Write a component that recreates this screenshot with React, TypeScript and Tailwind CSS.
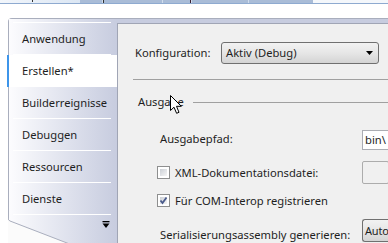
import React from "react";

const font = { fontFamily: '"Noto Sans", "Segoe UI", Arial, sans-serif' };

function Checkbox({ checked }: { checked?: boolean }) {
  return (
    <div className="relative w-[13px] h-[13px] border border-[#8e8f8f] bg-white p-[2px] shrink-0">
      <div className="w-full h-full bg-gradient-to-br from-[#cbcfd5] to-[#f6f6f6]" />
      {checked && (
        <svg className="absolute left-[1px] top-[1px]" width="9" height="9" viewBox="0 0 9 9">
          <path d="M1.5 4.5 L3.5 7 L7.5 1.5" fill="none" stroke="#4a5b8c" strokeWidth="1.8" />
        </svg>
      )}
    </div>
  );
}

function Tab({ label }: { label: string }) {
  return (
    <>
      <div className="h-[31px] flex items-center pl-[13px] text-[11.2px] leading-[16px] text-[#1e1e1e]">{label}</div>
      <div className="h-px ml-[4px] w-[98px] bg-white" />
    </>
  );
}

export default function App() {
  return (
    <div className="w-[388px] h-[243px] overflow-hidden bg-white flex flex-col relative" style={font}>
      {/* top strip */}
      <div className="h-[3px] flex shrink-0">
        <div className="w-[80px] bg-gradient-to-r from-[#f2f6fb] to-[#dbe6f3] relative">
          <div className="absolute left-[32px] top-0 w-px h-[2px] bg-[#333]" />
        </div>
        <div className="w-[233px] bg-[#a9bcd7] flex">
          <div className="w-[23px] border-r border-[#d0dcec]" />
          <div className="w-px bg-[#333]" />
          <div className="w-[59px] border-r border-[#d0dcec]" />
          <div className="w-[29px] border-r border-[#d0dcec] relative">
            <div className="absolute right-0 top-0 w-px h-[3px] bg-[#3a2030]" />
          </div>
          <div className="w-[57px] border-r border-[#d0dcec]" />
        </div>
        <div className="flex-1 bg-[#f4f7fb]" />
      </div>
      <div className="h-px bg-[#8eaad0] shrink-0" />
      <div className="h-[14px] shrink-0" />

      {/* main tab control */}
      <div className="flex-1 ml-[8px] flex border-l border-t border-[#a9aebd] rounded-tl-[4px] bg-[#c7ccdf] relative">
        {/* sidebar */}
        <div className="w-[108px] shrink-0 bg-gradient-to-r from-[#fcfcfe] to-[#c7ccdf] flex flex-col pt-[3px] relative">
          <div className="h-px ml-[4px] w-[98px] bg-white" />
          <div className="h-[31px] flex items-center pl-[13px] text-[11.2px] leading-[16px] text-[#1e1e1e]">Anwendung</div>
          <div className="h-px ml-[4px] w-[98px] bg-white" />
          <div className="h-[32px] -ml-[2px] border-l-2 border-[#3d95ea] bg-white flex items-center pl-[13px] text-[11.2px] leading-[16px] text-[#1e1e1e]">
            Erstellen*
          </div>
          <Tab label="Builderreignisse" />
          <Tab label="Debuggen" />
          <Tab label="Ressourcen" />
          <Tab label="Dienste" />
          <div className="flex justify-end pr-[7px] pt-[6px]">
            <svg width="8" height="8" viewBox="0 0 8 8">
              <rect x="0.5" y="0" width="7" height="1.3" fill="#000" />
              <path d="M0.5 2.5 H7.5 L4 7 Z" fill="#000" />
            </svg>
          </div>
          {/* folded bottom corner */}
          <svg className="absolute -left-[1px] top-[199px]" width="80" height="30" viewBox="0 0 80 30">
            <path d="M0 0 Q0 2 2 3 L72 30 L0 30 Z" fill="#fbfbfb" />
            <path d="M0 0 Q0 2 2 3 L72 30" fill="none" stroke="#a9aebd" strokeWidth="1" />
          </svg>
        </div>

        {/* content panel */}
        <div className="flex-1 mt-[4px] bg-[#f0f0f0] border-l border-t border-[#a0a5b5] flex flex-col text-[11.2px] leading-[16px] text-[#1e1e1e]">
          <div className="mt-[18px] h-[22px] flex items-center pl-[17px]">
            <div className="w-[86px] shrink-0">Konfiguration:</div>
            <div className="w-[158px] h-[22px] shrink-0 rounded-[3px] border border-[#707070] bg-gradient-to-b from-[#f2f2f2] via-[#e6e6e6] to-[#d4d4d4] flex items-center pl-[4px] pr-[4px] justify-between">
              <span>Aktiv (Debug)</span>
              <svg width="8" height="5" viewBox="0 0 8 5">
                <path d="M0 0 H7 L3.5 4 Z" fill="#000" />
              </svg>
            </div>
          </div>
          <div className="mt-[15px] ml-[15px] h-px bg-[#a0a0a0]" />
          <div className="mt-[14px] h-[16px] flex items-center pl-[20px]">
            <div className="w-[55px] shrink-0">Ausgabe</div>
            <div className="flex-1 h-px bg-[#a0a0a0]" />
          </div>
          <div className="mt-[20px] h-[20px] flex items-start pl-[42px]">
            <div className="w-[202px] shrink-0 mt-[1px]">Ausgabepfad:</div>
            <div className="flex-1 h-[20px] bg-white border border-[#abadb3] pl-[2px] flex items-center overflow-hidden">bin\</div>
          </div>
          <div className="mt-[11px] h-[23px] flex items-center pl-[39px]">
            <Checkbox />
            <div className="w-[187px] shrink-0 ml-[5px]">XML-Dokumentationsdatei:</div>
            <div className="flex-1 h-[23px] rounded-[2px] border border-[#acacac] bg-[#f0f0f0]" />
          </div>
          <div className="mt-[10px] h-[13px] flex items-center pl-[39px]">
            <Checkbox checked />
            <div className="ml-[5px] whitespace-nowrap">Für COM-Interop registrieren</div>
          </div>
          <div className="mt-[12px] h-[23px] flex items-start pl-[42px]">
            <div className="w-[202px] shrink-0 mt-[8px] whitespace-nowrap">Serialisierungsassembly generieren:</div>
            <div className="flex-1 h-[23px] rounded-l-[3px] border border-r-0 border-[#707070] bg-gradient-to-b from-[#f2f2f2] via-[#e6e6e6] to-[#d4d4d4] pl-[2px] flex items-center overflow-hidden text-[11px] tracking-[-0.2px]">Auto</div>
          </div>
        </div>
      </div>

      {/* mouse cursor */}
      <svg className="absolute left-[170px] top-[95px]" width="14" height="20" viewBox="0 0 14 20">
        <path d="M0.5 0.5 L0.5 15.5 L4 12.2 L6.6 18.3 L9 17.3 L6.5 11.3 L11.3 11.3 Z" fill="#fff" stroke="#000" strokeWidth="1" strokeLinejoin="round" />
      </svg>
    </div>
  );
}
